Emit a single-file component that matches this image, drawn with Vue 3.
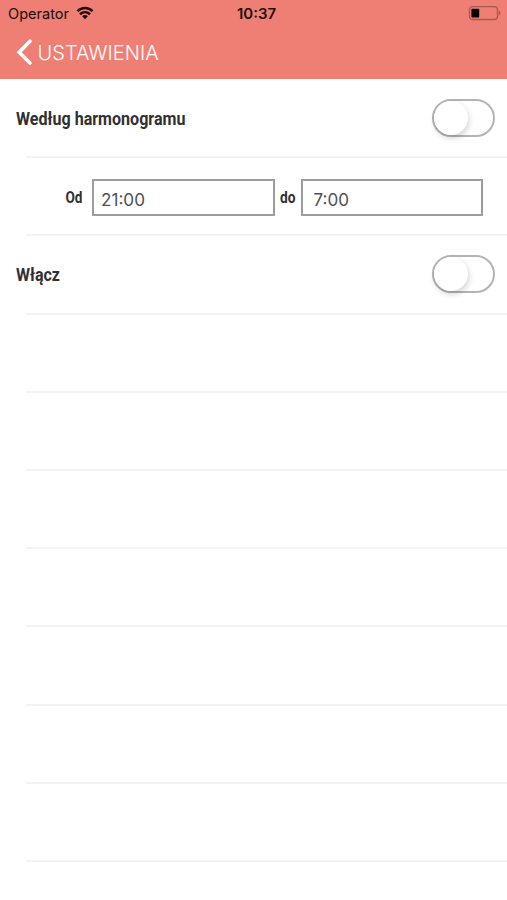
<script setup>
import { ref } from 'vue'

const from = ref('21:00')
const to = ref('7:00')
const emptyRows = 7
</script>

<template>
  <div class="screen">
    <header class="header">
      <div class="status">
        <div class="carrier">
          <svg width="64" height="20"><text x="0" y="15" textLength="61" lengthAdjust="spacingAndGlyphs" class="status-text">Operator</text></svg>
          <svg class="wifi" width="18" height="14" viewBox="0 0 18 14" fill="none" stroke="#210e0c" stroke-width="2.6">
            <path d="M1.4 5.2C5.7 .9 12.3 .9 16.6 5.2" />
            <path d="M4 8.3C7 5.5 11 5.5 14 8.3" />
            <path d="M6.1 10.3C7.8 8.7 10.2 8.7 11.9 10.3L9 13.2Z" fill="#210e0c" stroke="none" />
          </svg>
        </div>
        <svg width="40" height="20"><text x="0" y="15" textLength="39" lengthAdjust="spacingAndGlyphs" class="status-text time">10:37</text></svg>
        <div class="power">
          <svg width="34" height="16" viewBox="0 0 34 16">
            <rect x="1.5" y="1.7" width="28" height="12.8" rx="3" fill="none" stroke="#a9584f" stroke-width="1.3" />
            <rect x="3.4" y="3.7" width="7.8" height="8.8" rx="1" fill="#080302" />
            <path d="M31 5.8q2.6 2.2 0 4.4z" fill="#a9584f" stroke="#a9584f" stroke-width=".5" />
          </svg>
        </div>
      </div>
      <div class="nav">
        <svg width="17" height="28" viewBox="0 0 17 28" fill="none" stroke="#fff" stroke-width="3.6" stroke-linecap="round" stroke-linejoin="miter">
          <path d="M15 3.2L4.2 14.2L15 25" />
        </svg>
        <svg width="124" height="28"><text x="0.6" y="21" textLength="121" lengthAdjust="spacingAndGlyphs" class="title">USTAWIENIA</text></svg>
      </div>
    </header>

    <main>
      <section class="row">
        <svg width="172" height="28"><text x="0" y="20.5" textLength="169.5" lengthAdjust="spacingAndGlyphs" class="label">Według harmonogramu</text></svg>
        <div class="toggle"><i class="knob"></i></div>
      </section>
      <section class="row range">
        <svg class="od" width="18" height="28"><text x="0.5" y="20.7" textLength="17" lengthAdjust="spacingAndGlyphs" class="label small">Od</text></svg>
        <div class="field"><svg width="60" height="28"><text x="0" y="21" textLength="44" lengthAdjust="spacingAndGlyphs" class="value">{{ from }}</text></svg></div>
        <svg class="do" width="16" height="28"><text x="0" y="20.7" textLength="15.5" lengthAdjust="spacingAndGlyphs" class="label small">do</text></svg>
        <div class="field late"><svg width="60" height="28"><text x="-0.5" y="21" textLength="35.5" lengthAdjust="spacingAndGlyphs" class="value">{{ to }}</text></svg></div>
      </section>
      <section class="row">
        <svg width="60" height="28"><text x="0" y="20.5" textLength="44" lengthAdjust="spacingAndGlyphs" class="label">Włącz</text></svg>
        <div class="toggle"><i class="knob"></i></div>
      </section>
      <section v-for="n in emptyRows" :key="n" class="row"></section>
    </main>
  </div>
</template>

<style>
body { margin: 0; background: #fff; }
</style>

<style scoped>
.screen {
  width: 507px;
  height: 900px;
  overflow: hidden;
  background: #fff;
}
svg { display: block; flex: none; overflow: visible; }
.header {
  height: 79px;
  box-sizing: border-box;
  background: #ef7f74;
}
.status {
  display: grid;
  grid-template-columns: 237px 40px 1fr;
  height: 26px;
  padding-top: 4px;
  box-sizing: border-box;
}
.carrier { display: flex; padding-left: 8px; }
.wifi { margin: 2px 0 0 4px; }
.power { display: flex; justify-content: flex-end; padding: 1px 5px 0 0; }
.status-text { font: 400 14.5px Inter, sans-serif; fill: #210e0c; }
.time { font-weight: 600; }
.nav {
  display: flex;
  gap: 5px;
  padding: 12px 0 0 15px;
}
.nav svg:last-child { margin-top: 1px; }
.title { font: 300 20.5px Inter, sans-serif; fill: #fff; }
.row {
  position: relative;
  display: flex;
  align-items: center;
  justify-content: space-between;
  height: 78.2px;
  padding: 0 12px 0 15.5px;
  box-sizing: border-box;
}
.row::after {
  content: "";
  position: absolute;
  left: 26px;
  right: 0;
  bottom: -1px;
  height: 2px;
  background: #f3f3f3;
}
.label { font: 700 18px Roboto, sans-serif; fill: #303030; }
.small { font-size: 16px; }
.toggle {
  display: flex;
  width: 63px;
  height: 38px;
  box-sizing: border-box;
  border: 2px solid #b4b4b4;
  border-radius: 19px;
}
.knob {
  width: 34px;
  height: 34px;
  border-radius: 50%;
  background: #fff;
  box-shadow: 1px 3px 6px rgba(0, 0, 0, 0.18);
}
.range { justify-content: flex-start; padding-left: 65px; }
.od { margin-right: 9px; }
.do { margin: 0 5px; }
.field {
  width: 182.5px;
  height: 37px;
  padding: 4px 0 0 7px;
  margin-top: 2px;
  box-sizing: border-box;
  border: 2px solid #9c9c9c;
}
.late { padding-left: 11px; }
.value { font: 400 17px Inter, sans-serif; fill: #505050; }
</style>
